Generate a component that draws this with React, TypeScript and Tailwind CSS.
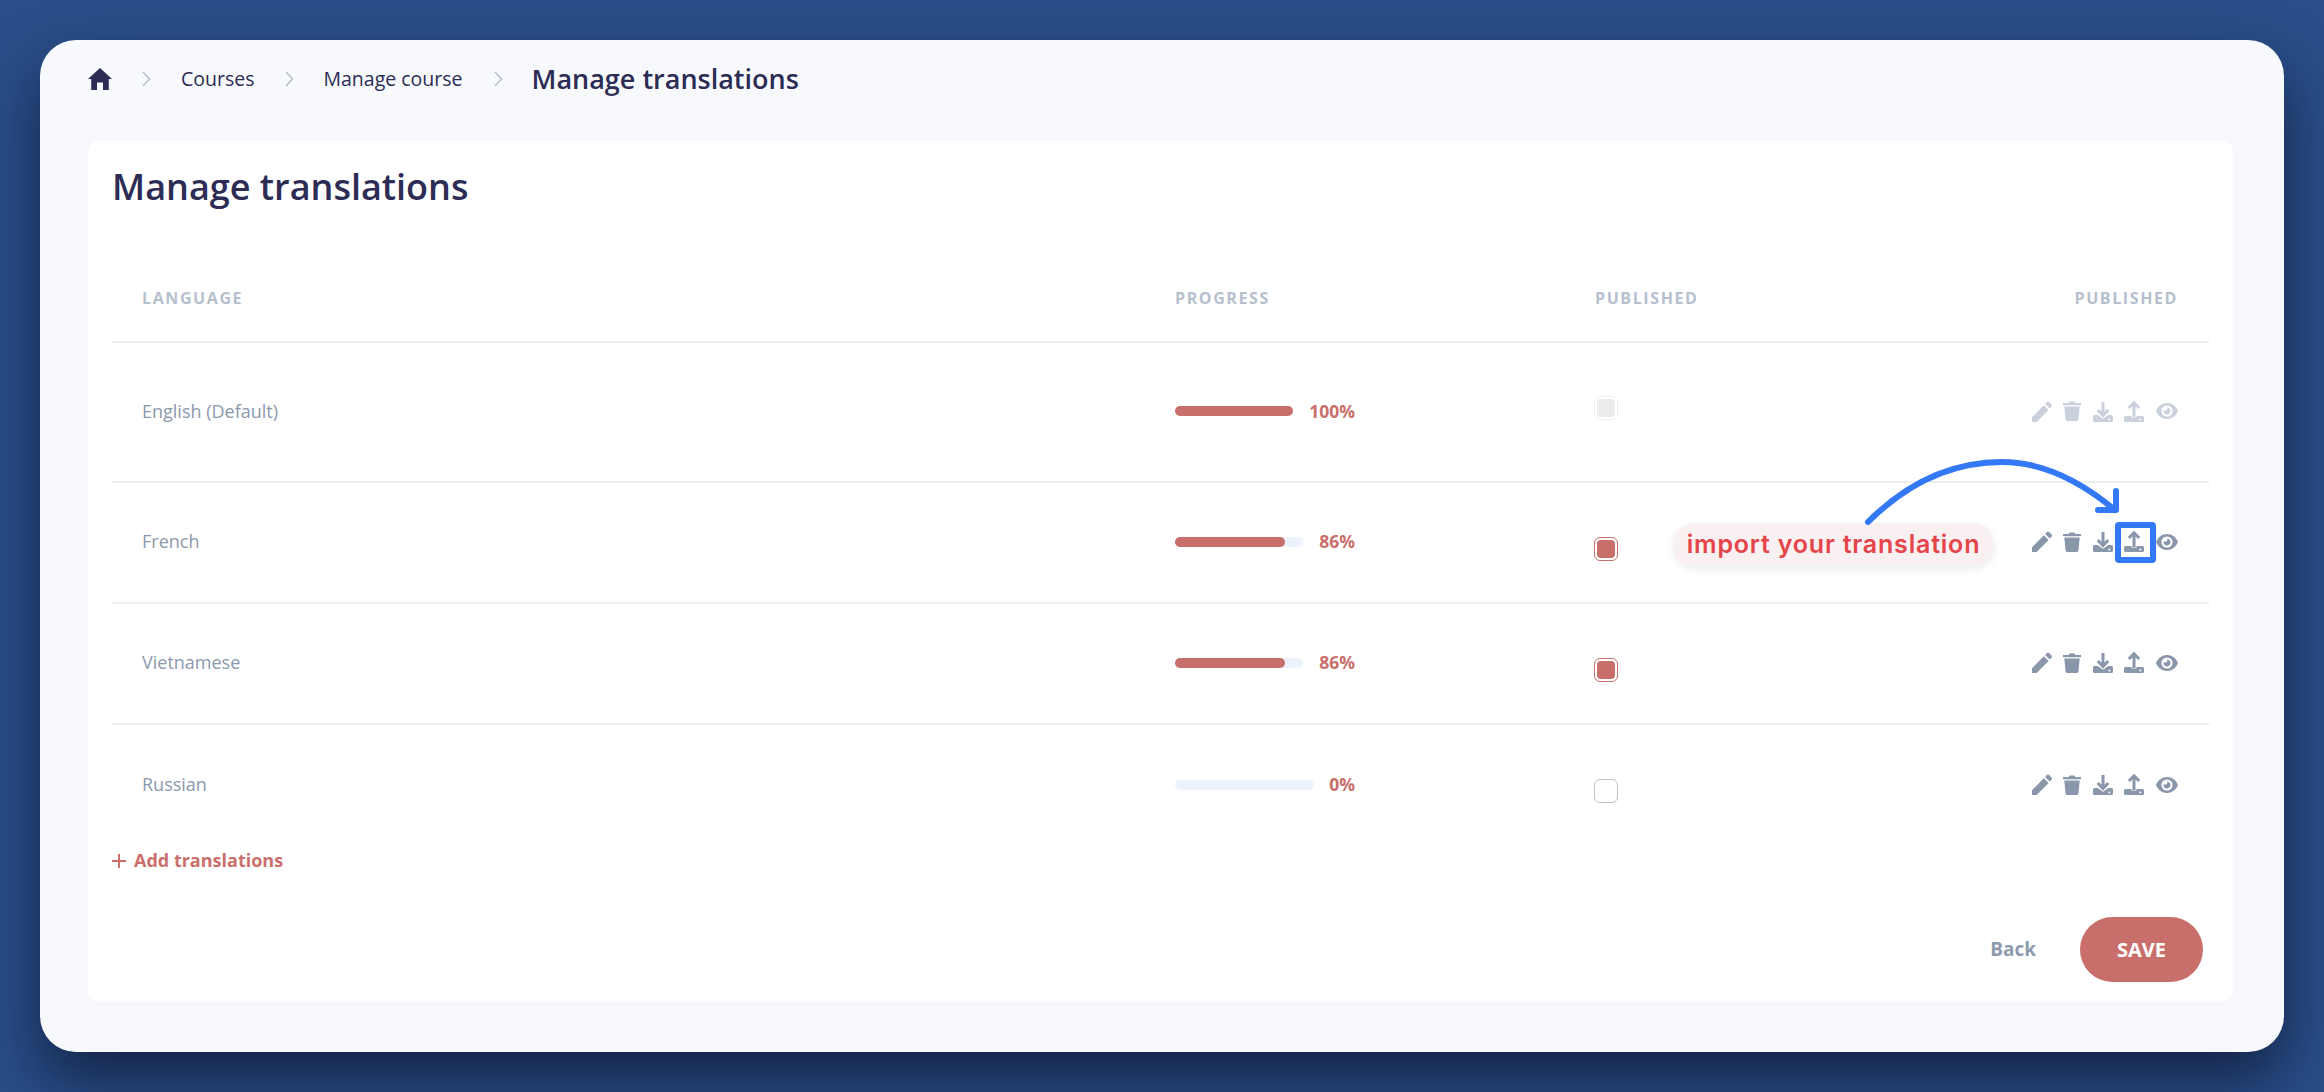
import React from "react";

const Tray = ({ notch }: { notch?: boolean }) => (
  <>
    <path d={notch ? "M1.500 15h6v1.500h5V15h6A1.500 1.500 0 0 1 20 16.500v3A1.500 1.500 0 0 1 18.500 21h-17A1.500 1.500 0 0 1 0 19.500v-3A1.500 1.500 0 0 1 1.500 15z" : "M1.500 14h3.200l5.300 3.800 5.300-3.800h3.200A1.500 1.500 0 0 1 20 15.500v4a1.500 1.500 0 0 1-1.500 1.500h-17A1.500 1.500 0 0 1 0 19.500v-4A1.500 1.500 0 0 1 1.500 14z"} fill="currentColor" />
    <circle cx="16.300" cy="18.600" r="1" fill="#fff" />
  </>
);

const Icons = ({ color }: { color: string }) => (
  <div className={`flex items-center ${color}`}>
    <svg className="mr-[11px]" width="20" height="21" viewBox="0 0 20 21" fill="currentColor"><path d="M0 21v-4.800L11.800 4.200l4.800 4.800L4.600 21z M13.100 2.900 14.900 1a1.500 1.500 0 0 1 2.200 0l2.400 2.500a1.500 1.500 0 0 1 0 2.200l-1.700 1.900z" /></svg>
    <svg className="mr-[12px]" width="18" height="20" viewBox="0 0 18 20" fill="currentColor"><path d="M0 2h5.500L6.500.6h5l1 1.400H18v2.200H0z M1.300 5.400h15.400l-1.200 12.800a1.900 1.900 0 0 1-1.900 1.800H4.400a1.900 1.900 0 0 1-1.900-1.800z" /></svg>
    <svg className="mr-[11px]" width="20" height="21" viewBox="0 0 20 21" fill="none">
      <Tray />
      <path d="M10 1v13.500M4.800 9 10 14.500 15.200 9" stroke="currentColor" strokeWidth="3" />
    </svg>
    <svg className="mr-[12px]" width="20" height="21" viewBox="0 0 20 21" fill="none">
      <Tray notch />
      <path d="M10 2v14M4.800 7 10 1.800 15.200 7" stroke="currentColor" strokeWidth="3" />
    </svg>
    <svg width="22" height="16" viewBox="0 0 22 16" fill="currentColor"><path fillRule="evenodd" d="M11 0c5 0 9 3.200 11 8-2 4.800-6 8-11 8S2 12.800 0 8c2-4.800 6-8 11-8zm0 2.400a5.600 5.600 0 1 0 0 11.200 5.600 5.600 0 0 0 0-11.200zm0 2.100a3.500 3.500 0 1 1-3.300 2.300 2 2 0 0 0 3.300-2.300z" /></svg>
  </div>
);

const Chevron = () => (
  <svg width="9" height="16" viewBox="0 0 9 16" fill="none" stroke="#b4bdcb" strokeWidth="1.4"><path d="M1 1l6.500 7L1 15" /></svg>
);

type Row = { name: string; pct: number; h: string; barW: string; fill: string; check: "off" | "on" | "empty"; mt: string; faded?: boolean };

const rows: Row[] = [
  { name: "English (Default)", pct: 100, h: "h-[140px]", barW: "w-[118px]", fill: "w-[118px]", check: "off", mt: "-mt-[7px]", faded: true },
  { name: "French", pct: 86, h: "h-[121px]", barW: "w-[128px]", fill: "w-[110px]", check: "on", mt: "mt-[14px]" },
  { name: "Vietnamese", pct: 86, h: "h-[121px]", barW: "w-[128px]", fill: "w-[110px]", check: "on", mt: "mt-[14px]" },
  { name: "Russian", pct: 0, h: "h-[121px]", barW: "w-[139px]", fill: "w-0", check: "empty", mt: "mt-[12px]" },
];

const Check = ({ kind }: { kind: Row["check"] }) => {
  if (kind === "off")
    return (
      <div className="flex size-[24px] items-center justify-center rounded-[6px] border border-[#eceef1] bg-white">
        <div className="size-[18px] rounded-[4px] bg-[#ebecee]" />
      </div>
    );
  if (kind === "on")
    return (
      <div className="flex size-[24px] items-center justify-center rounded-[6px] border border-[#c86f6b] bg-white">
        <div className="size-[18px] rounded-[4px] bg-[#c86f6b]" />
      </div>
    );
  return <div className="size-[24px] rounded-[6px] border-[1.5px] border-[#bcc3cf] bg-white" />;
};

export default function App() {
  return (
    <div className="h-[1092px] w-[2324px] overflow-hidden bg-[#2a4e88] p-10 font-['Open_Sans','Noto_Sans',sans-serif]">
      <div className="relative flex h-[1012px] flex-col rounded-[36px] bg-[#f8f9fd] pl-[48px] pr-[51px] shadow-[0_30px_60px_rgba(8,16,40,0.65)]">
        <div className="flex h-[78px] items-center text-[#2c2c54]">
          <svg width="24" height="22" viewBox="0 0 24 22" fill="#2c2c54"><path d="M12 0l12 11h-3.200v11h-5.800v-7.500H9V22H3.200V11H0z" /></svg>
          <span className="ml-[30px] flex"><Chevron /></span>
          <span className="ml-[30px] text-[19.5px] leading-none">Courses</span>
          <span className="ml-[31px] flex"><Chevron /></span>
          <span className="ml-[29px] text-[19.5px] leading-none">Manage course</span>
          <span className="ml-[31px] flex"><Chevron /></span>
          <span className="ml-[29px] pb-[2px] text-[27px] font-semibold leading-none">Manage translations</span>
        </div>
        <div className="mt-[23px] flex h-[860px] flex-col rounded-[10px] bg-white px-[24px]">
          <h1 className="mt-[21px] text-[36px] font-semibold leading-[50px] text-[#2c2c54]">Manage translations</h1>
          <div className="mt-[59px] flex h-[72px] items-start border-b-2 border-[#ebeff3] pl-[30px] pr-[31px] pt-[16px] text-[16px] font-bold leading-[22px] tracking-[1.6px] text-[#b6bfcd]">
            <div className="w-[1033px]">LANGUAGE</div>
            <div className="w-[420px]">PROGRESS</div>
            <div className="flex-1">PUBLISHED</div>
            <div>PUBLISHED</div>
          </div>
          {rows.map((r, i) => (
            <div key={r.name} className={`flex ${r.h} items-center pb-[2px] pl-[30px] pr-[31px] ${i < 3 ? "border-b-2 border-[#ebeff3]" : ""}`}>
              <div className="w-[1033px] text-[18px] text-[#8c99ac]">{r.name}</div>
              <div className="flex w-[180px] items-center justify-between">
                <div className={`h-[10px] ${r.barW} rounded-full bg-[#edf3fc]`}>
                  <div className={`h-[10px] ${r.fill} rounded-full bg-[#c86f6b]`} />
                </div>
                <span className="text-[17.5px] font-bold text-[#c86f6b]">{r.pct}%</span>
              </div>
              <div className={`ml-[239px] ${r.mt} flex-1`}><Check kind={r.check} /></div>
              <Icons color={r.faded ? "text-[#cbd1dc]" : "text-[#8a96a9]"} />
            </div>
          ))}
          <div className="mt-[1px] flex items-center gap-[8px] text-[18px] font-bold text-[#cb6f6c]">
            <svg width="14" height="14" viewBox="0 0 14 14" stroke="currentColor" strokeWidth="2"><path d="M7 0v14M0 7h14" /></svg>
            Add translations
          </div>
          <div className="mt-[43px] flex items-center justify-end gap-[44px] pr-[6px]">
            <button className="text-[19px] font-bold text-[#8e9bae]">Back</button>
            <button className="h-[65px] w-[123px] rounded-full bg-[#c86f6b] text-[20px] font-bold text-white">SAVE</button>
          </div>
        </div>
        <div className="absolute left-[1633px] top-[483px] flex h-[43px] w-[321px] items-center justify-center rounded-full bg-[#f9f0f1] font-['Inter',sans-serif] text-[25px] font-semibold tracking-[0.8px] text-[#e5444a] shadow-[0_3px_8px_rgba(0,0,0,0.08)]">
          import your translation
        </div>
        <div className="absolute left-[2075px] top-[482px] h-[41px] w-[41px] rounded-[4px] border-[6px] border-[#3378f6]" />
        <svg className="absolute left-[1820px] top-[410px]" width="270" height="85" viewBox="0 0 270 85" fill="none" stroke="#3378f6" strokeWidth="6" strokeLinecap="round" strokeLinejoin="round">
          <path d="M8 72 C 50 30, 95 12, 142 12 C 185 12, 225 35, 255 60" />
          <path d="M256 41 V60 H238" />
        </svg>
      </div>
    </div>
  );
}
